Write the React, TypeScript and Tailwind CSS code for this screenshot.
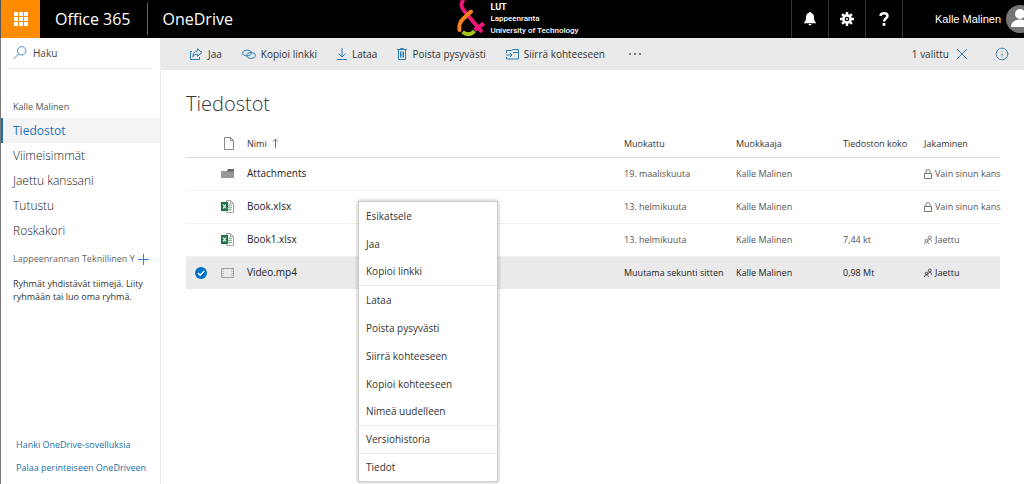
import React from 'react';
import { Info } from 'lucide-react';

const iconProps = { fill: 'none', stroke: 'currentColor', viewBox: '0 0 16 16' };

const SearchIcon = () => (
  <svg {...iconProps} className="h-3.5 w-3.5 shrink-0 text-[#2b7cb8]">
    <circle cx="10" cy="5.500" r="4.800" />
    <path d="M6.500 9 .8 14.800" />
  </svg>
);

const ShareIcon = () => (
  <svg {...iconProps} viewBox="0 0 14 12" className="h-3 w-3.5 text-[#2b7cb8]">
    <path d="M3 3.500H1.500v8h9V9" />
    <path d="M8.500.8 13 4.500l-4.500 3.700V6.200C6.500 6.200 5 7 3.800 8.800 4 5.500 5.500 3 8.500 2.800z" />
  </svg>
);

const LinkIcon = () => (
  <svg {...iconProps} viewBox="0 0 14 12" className="h-3 w-3.5 text-[#2b7cb8]">
    <ellipse cx="5" cy="5" rx="4.300" ry="2.800" />
    <ellipse cx="9" cy="7.500" rx="4.300" ry="2.800" />
  </svg>
);

const DownloadIcon = () => (
  <svg {...iconProps} viewBox="0 0 10 12" className="h-3 w-2.5 text-[#2b7cb8]">
    <path d="M5 0v9M1.500 5.500 5 9l3.500-3.500M0 11.500h10" />
  </svg>
);

const TrashIcon = () => (
  <svg {...iconProps} viewBox="0 0 10 12" className="h-3 w-2.5 text-[#2b7cb8]">
    <path d="M0 1.500h10M3.500 1.500v-1h3v1M1.500 1.500v10h7v-10M3.500 3.500v6M5 3.500v6M6.500 3.500v6" />
  </svg>
);

const MoveIcon = () => (
  <svg {...iconProps} viewBox="0 0 13 11" className="h-[11px] w-[13px] text-[#2b7cb8]">
    <path d="M.5 4V1.500h5l1.500-1h5.500v9.500H.5V8M7 3.500h5.500M0 6h6M4 4l2 2-2 2" />
  </svg>
);

const CloseIcon = () => (
  <svg {...iconProps} viewBox="0 0 10 10" className="h-2.5 w-2.5 text-[#2b7cb8]">
    <path d="m0 0 10 10M10 0 0 10" />
  </svg>
);

const WaffleIcon = () => (
  <svg viewBox="0 0 14 14" className="h-3.5 w-3.5" fill="#fff">
    {[0, 5, 10].map((y) => [0, 5, 10].map((x) => <rect key={`${x}-${y}`} x={x} y={y} width="4" height="4" />))}
  </svg>
);

const BellIcon = () => (
  <svg viewBox="0 0 12 14" className="h-3.5 w-3" fill="#fff">
    <path d="M6 0c.7 0 1.200.500 1.200 1.100C9 1.600 10 3 10 5c0 3 .5 4.500 2 5.500v.8H0v-.8C1.500 9.500 2 8 2 5c0-2 1-3.400 2.800-3.900C4.800.5 5.300 0 6 0zM4.500 12h3c0 .8-.7 1.300-1.500 1.300S4.500 12.800 4.500 12z" />
  </svg>
);

const GearIcon = () => (
  <svg viewBox="0 0 14 14" className="h-3.5 w-3.5">
    <circle cx="7" cy="7" r="3.600" fill="none" stroke="#fff" strokeWidth="2.600" />
    <path
      d="M7 0v3M7 11v3M0 7h3M11 7h3M2.100 2.100l2 2M9.900 9.900l2 2M2.100 11.900l2-2M9.900 4.100l2-2"
      stroke="#fff"
      strokeWidth="2.400"
    />
    <circle cx="7" cy="7" r="1" fill="#fff" />
  </svg>
);

const HelpIcon = () => (
  <svg viewBox="0 0 10 14" className="h-3.5 w-2.5" fill="none">
    <path d="M1.500 3.800C1.700 2 3 1.300 5 1.300s3.500 1 3.500 2.700C8.500 6.300 5 6.300 5 9.500" stroke="#fff" strokeWidth="2.500" />
    <rect x="3.600" y="11" width="2.800" height="2.800" fill="#fff" />
  </svg>
);

const LutLogo = () => (
  <svg viewBox="0 0 28 38" className="h-[38px] w-7 shrink-0" fill="none" strokeWidth="4">
    <path d="M5.500 32c4 3 8.500 3 12-1" stroke="#a2c617" />
    <path d="M7 0C3 3 4 7 8 12l17 20M17.500 30l9.500-6.500" stroke="#ec1777" />
    <path d="M14 11.500 6 19c-4 4-4 7-3.500 11" stroke="#f58220" strokeLinecap="round" />
  </svg>
);

const FolderIcon = () => (
  <svg viewBox="0 0 13 10" className="h-2.5 w-[13px]">
    <path d="M0 2h6l1-2h6v9H0z" fill="#999" />
    <path d="M7 0h6v2.500H6z" fill="#666" />
  </svg>
);

const ExcelIcon = () => (
  <svg viewBox="0 0 13 13" className="h-[13px] w-[13px]">
    <path d="M5.500.5h4l3 3v9h-7z" fill="#fff" stroke="#a5a5a5" />
    <path d="M7 5.500h4M7 7.500h4M7 9.500h4M9 4v7" stroke="#8fbda3" />
    <path d="M9.500.5v3h3" fill="none" stroke="#a5a5a5" />
    <rect y="2" width="7" height="9" fill="#217346" />
    <path d="m2 4.500 3 4M5 4.500l-3 4" stroke="#fff" strokeWidth="1.200" />
  </svg>
);

const VideoIcon = () => (
  <svg viewBox="0 0 13 10" className="h-2.5 w-[13px]" fill="none">
    <path d="M.5.5h12v9H.5z" stroke="#a0a0a0" />
    <path d="M2 1v8M11 1v8" stroke="#a0a0a0" strokeDasharray="1 1" />
  </svg>
);

const PageIcon = () => (
  <svg viewBox="0 0 10 13" className="h-[13px] w-2.5" fill="none" stroke="#8a8a8a">
    <path d="M.5.5h6l3 3v9h-9zM6.500.5v3h3" />
  </svg>
);

const SortIcon = () => (
  <svg viewBox="0 0 7 10" className="h-2.5 w-[7px]" fill="none" stroke="#777">
    <path d="M3.500 10V1M1 3.500 3.500 1 6 3.500" />
  </svg>
);

const PlusIcon = () => (
  <svg viewBox="0 0 11 11" className="h-[11px] w-[11px]" stroke="currentColor">
    <path d="M5.500 0v11M0 5.500h11" />
  </svg>
);

const LockIcon = () => (
  <svg viewBox="0 0 8 10" className="h-2.5 w-2 shrink-0" fill="none" stroke="#777">
    <path d="M.5 4.500h7v5h-7zM2 4.500V2.500a2 2 0 0 1 4 0v2" />
  </svg>
);

const PeopleIcon = () => (
  <svg viewBox="0 0 9 10" className="h-2.5 w-2 shrink-0" fill="none" stroke="currentColor" strokeWidth=".8">
    <circle cx="6.500" cy="2.200" r="1.700" />
    <path d="M4.500 6.500c0-3.200 4-3.200 4 .5" />
    <circle cx="2.800" cy="5.500" r="1.400" />
    <path d="M.5 9.500c0-3.400 4.500-3.400 4.500 0" />
  </svg>
);

const navItems = ['Tiedostot', 'Viimeisimmät', 'Jaettu kanssani', 'Tutustu', 'Roskakori'];

const commands = [
  { label: 'Jaa', icon: ShareIcon },
  { label: 'Kopioi linkki', icon: LinkIcon },
  { label: 'Lataa', icon: DownloadIcon },
  { label: 'Poista pysyvästi', icon: TrashIcon },
  { label: 'Siirrä kohteeseen', icon: MoveIcon },
];

const files = [
  { name: 'Attachments', icon: FolderIcon, modified: '19. maaliskuuta', size: '', shared: false, selected: false },
  { name: 'Book.xlsx', icon: ExcelIcon, modified: '13. helmikuuta', size: '', shared: false, selected: false },
  { name: 'Book1.xlsx', icon: ExcelIcon, modified: '13. helmikuuta', size: '7,44 kt', shared: true, selected: false },
  { name: 'Video.mp4', icon: VideoIcon, modified: 'Muutama sekunti sitten', size: '0,98 Mt', shared: true, selected: true },
];

const menuGroups = [
  ['Esikatsele', 'Jaa', 'Kopioi linkki'],
  ['Lataa', 'Poista pysyvästi', 'Siirrä kohteeseen', 'Kopioi kohteeseen', 'Nimeä uudelleen'],
  ['Versiohistoria'],
  ['Tiedot'],
];

const Header = () => (
  <header className="flex h-[38px] shrink-0 overflow-hidden bg-black text-white">
    <button aria-label="Sovellukset" className="flex w-10 shrink-0 items-center justify-center border-l border-[#555] bg-[#ff8c00]">
      <WaffleIcon />
    </button>
    <div className="flex items-center text-base whitespace-nowrap">
      <a href="#" className="pr-4 pl-[15px]">Office 365</a>
      <span className="h-8 w-px bg-[#666]" />
      <a href="#" className="pl-[15px]">OneDrive</a>
    </div>
    <div className="flex flex-1 justify-center gap-[5px] pl-3">
      <LutLogo />
      <div className="pt-px font-['Roboto',sans-serif] text-[8px] leading-3 font-medium whitespace-nowrap">
        <p className="text-[9px] leading-3 font-bold">LUT</p>
        <p>Lappeenranta</p>
        <p>University of Technology</p>
      </div>
    </div>
    <div className="flex shrink-0">
      <button aria-label="Ilmoitukset" className="flex w-[37px] items-center justify-center border-l border-[#333]">
        <BellIcon />
      </button>
      <button aria-label="Asetukset" className="flex w-[37px] items-center justify-center border-l border-[#333]">
        <GearIcon />
      </button>
      <button aria-label="Ohje" className="flex w-[37px] items-center justify-center border-l border-[#333]">
        <HelpIcon />
      </button>
      <button className="flex w-[122px] items-center gap-[5px] border-l border-[#333] pl-8 font-['Liberation_Sans',sans-serif] text-[11px] whitespace-nowrap">
        Kalle Malinen
        <svg viewBox="0 0 28 28" className="h-7 w-7 shrink-0">
          <circle cx="14" cy="14" r="14" fill="#767676" />
          <circle cx="14" cy="9" r="5" fill="#fff" />
          <path d="M5 22c0-10 18-10 18 0z" fill="#fff" />
        </svg>
      </button>
    </div>
  </header>
);

const Sidebar = () => (
  <aside className="flex w-[161px] shrink-0 flex-col border-r border-l border-r-[#eaeaea] border-l-[#777]">
    <label className="mx-2 flex h-[31px] items-center gap-1.5 border-b border-[#eaeaea] pl-1">
      <SearchIcon />
      <input type="text" placeholder="Haku" aria-label="Haku" className="w-full text-[10px] outline-none placeholder:text-[#444]" />
    </label>
    <h2 className="mt-7 pl-3 text-[9px] leading-5 text-[#555]">Kalle Malinen</h2>
    <nav className="mt-px flex flex-col text-xs">
      {navItems.map((item, index) => (
        <a
          key={item}
          href="#"
          className={
            index === 0
              ? 'flex h-[25px] items-center border-l-2 border-[#1a6fb0] bg-[#f4f4f4] pl-2.5 text-[#1a75bb]'
              : 'flex h-[25px] items-center pl-3 font-light text-[#222]'
          }
        >
          {item}
        </a>
      ))}
    </nav>
    <div className="mt-1.5 flex items-center gap-[3px] pl-3 text-[9px] leading-5 whitespace-nowrap text-[#666]">
      <h2>Lappeenrannan Teknillinen Y</h2>
      <button aria-label="Uusi ryhmä" className="text-[#2b88d8]">
        <PlusIcon />
      </button>
    </div>
    <p className="mt-2 pl-3 text-[9px] leading-[13px] text-[#333]">
      Ryhmät yhdistävät tiimejä. Liity
      <br />
      ryhmään tai luo oma ryhmä.
    </p>
    <div className="mt-auto flex flex-col gap-[3px] pb-1.5 pl-[15px] text-[9px] leading-5 whitespace-nowrap text-[#1a6fa8]">
      <a href="#">Hanki OneDrive-sovelluksia</a>
      <a href="#">Palaa perinteiseen OneDriveen</a>
    </div>
  </aside>
);

const CommandBar = () => (
  <div className="flex h-8 items-center bg-[#eaeaea] pr-[15px] pl-7 text-[10px] whitespace-nowrap text-[#333]">
    <div className="flex items-center gap-5">
      {commands.map(({ label, icon: Icon }) => (
        <button key={label} className="flex items-center gap-[5px]">
          <Icon />
          {label}
        </button>
      ))}
      <button aria-label="Lisää" className="flex gap-[3px] pl-1">
        <span className="h-0.5 w-0.5 rounded-full bg-[#555]" />
        <span className="h-0.5 w-0.5 rounded-full bg-[#555]" />
        <span className="h-0.5 w-0.5 rounded-full bg-[#555]" />
      </button>
    </div>
    <button className="ml-auto flex items-center gap-2">
      1 valittu
      <CloseIcon />
    </button>
    <button aria-label="Tiedot" className="ml-7 text-[#2b7cb8]">
      <Info size={14} strokeWidth={1.5} />
    </button>
  </div>
);

const FileTable = () => (
  <table className="mt-2 w-full table-fixed text-left text-[9px] whitespace-nowrap text-[#555]">
    <colgroup>
      <col className="w-[35px]" />
      <col className="w-[26px]" />
      <col />
      <col className="w-28" />
      <col className="w-[107px]" />
      <col className="w-[81px]" />
      <col className="w-[76px]" />
    </colgroup>
    <thead>
      <tr className="h-[27px] border-b border-[#dcdcdc] text-[#333]">
        <th />
        <th className="pl-[3px]"><PageIcon /></th>
        <th className="font-normal">
          <span className="flex items-center gap-[5px]">
            Nimi <SortIcon />
          </span>
        </th>
        <th className="font-normal">Muokattu</th>
        <th className="font-normal">Muokkaaja</th>
        <th className="font-normal">Tiedoston koko</th>
        <th className="font-normal">Jakaminen</th>
      </tr>
    </thead>
    <tbody>
      {files.map(({ name, icon: Icon, modified, size, shared, selected }) => (
        <tr
          key={name}
          className={selected ? 'h-[33px] bg-[#eaeaea] text-[#222]' : 'h-[33px] border-b border-[#f2f2f2]'}
        >
          <td className="pl-2">
            {selected && (
              <label className="grid h-3.5 w-3.5 place-items-center">
                <input
                  type="checkbox"
                  defaultChecked
                  aria-label={name}
                  className="col-start-1 row-start-1 h-3 w-3 appearance-none rounded-full bg-[#0072c6]"
                />
                <svg viewBox="0 0 12 12" className="pointer-events-none col-start-1 row-start-1 h-3 w-3" fill="none" stroke="#fff" strokeWidth="1.500">
                  <path d="m3 6 2.200 2.200L9.200 4" />
                </svg>
              </label>
            )}
          </td>
          <td><Icon /></td>
          <td className="text-[10px] text-[#222]">{name}</td>
          <td>{modified}</td>
          <td>Kalle Malinen</td>
          <td>{size}</td>
          <td>
            <span className="flex items-center gap-[3px]">
              {shared ? <PeopleIcon /> : <LockIcon />}
              {shared ? 'Jaettu' : 'Vain sinun kans'}
            </span>
          </td>
        </tr>
      ))}
    </tbody>
  </table>
);

const ContextMenu = () => (
  <div role="menu" className="absolute top-[163px] left-[197px] w-[140px] border border-[#ccc] bg-white text-[10px] text-[#333] shadow-[0_0_4px_rgba(0,0,0,0.3)]">
    {menuGroups.map((group) => (
      <div key={group[0]} role="group" className="flex flex-col border-b border-[#eaeaea] last:border-b-0">
        {group.map((item) => (
          <button key={item} role="menuitem" className="h-7 pl-[7px] text-left last:h-[27px]">
            {item}
          </button>
        ))}
      </div>
    ))}
  </div>
);

const App = () => {
  return (
    <div className="flex min-h-screen flex-col overflow-hidden bg-white font-['Open_Sans','Noto_Sans',sans-serif]">
      <Header />
      <div className="flex flex-1">
        <Sidebar />
        <main className="relative min-w-0 flex-1">
          <CommandBar />
          <div className="pt-4 pr-6 pl-[25px]">
            <h1 className="text-xl leading-9 font-light text-[#333]">Tiedostot</h1>
            <FileTable />
          </div>
          <ContextMenu />
        </main>
      </div>
    </div>
  );
};

export default App;
